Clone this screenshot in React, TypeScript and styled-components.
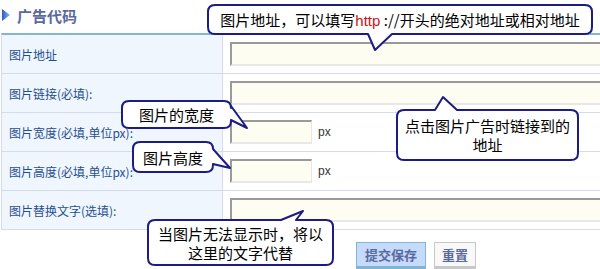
import React from 'react'
import styled, { createGlobalStyle } from 'styled-components';

const GlobalStyle = createGlobalStyle`
  body {
    margin: 0;
    background: #ffffff;
    font-family: "Liberation Sans", "Noto Sans CJK SC", sans-serif;
  }
`;

type Side = 'top' | 'right' | 'bottom';

interface CalloutType {
    left: number;
    top: number;
    width: number;
    height: number;
    side: Side;
    base: [number, number];
    tip: [number, number];
    children: React.ReactNode;
}

// rounded box with a pointer, drawn clockwise in one path
const bubblePath = (w: number, h: number, side: Side, base: [number, number], tip: [number, number]) => {
    const r = 7;
    const [a, b] = base;
    const t = `${tip[0]},${tip[1]}`;
    let d = `M ${r},0 `;
    if (side === 'top') d += `L ${a},0 L ${t} L ${b},0 `;
    d += `L ${w - r},0 Q ${w},0 ${w},${r} `;
    if (side === 'right') d += `L ${w},${a} L ${t} L ${w},${b} `;
    d += `L ${w},${h - r} Q ${w},${h} ${w - r},${h} `;
    if (side === 'bottom') d += `L ${b},${h} L ${t} L ${a},${h} `;
    d += `L ${r},${h} Q 0,${h} 0,${h - r} L 0,${r} Q 0,0 ${r},0 Z`;
    return d;
};

const Callout: React.FC<CalloutType> = ({ left, top, width, height, side, base, tip, children }) => (
    <CalloutBox style={{ left, top, width, height }}>
        <CalloutShape width={width} height={height}>
            <path d={bubblePath(width, height, side, base, tip)} fill="#ffffff" stroke="#1c1c84" strokeWidth={2} strokeLinejoin="round" />
        </CalloutShape>
        <CalloutText>{children}</CalloutText>
    </CalloutBox>
);

const rows = [
    { label: '图片地址', size: 'wide' },
    { label: '图片链接(必填):', size: 'wide' },
    { label: '图片宽度(必填,单位px):', size: 'small' },
    { label: '图片高度(必填,单位px):', size: 'small' },
    { label: '图片替换文字(选填):', size: 'wide' },
];

export default function App() {

    return (
        <Page>
            <GlobalStyle />

            <Header>
                <svg width="8" height="12" viewBox="0 0 8 12">
                    <defs>
                        <linearGradient id="tri" x1="0" y1="0" x2="1" y2="0">
                            <stop offset="0" stopColor="#2a5fc0" />
                            <stop offset="1" stopColor="#8fb8ee" />
                        </linearGradient>
                    </defs>
                    <polygon points="0,0 8,6 0,12" fill="url(#tri)" />
                </svg>
                <HeaderTitle>广告代码</HeaderTitle>
            </Header>

            <Table>
                {rows.map((row) => (
                    <Row key={row.label}>
                        <LabelCell>{row.label}</LabelCell>
                        <FieldCell>
                            <TextInput $small={row.size === 'small'} />
                            {row.size === 'small' && <Unit>px</Unit>}
                        </FieldCell>
                    </Row>
                ))}
            </Table>

            <Actions>
                <SubmitButton>提交保存</SubmitButton>
                <ResetButton>重置</ResetButton>
            </Actions>

            <Callout left={208} top={5} width={384} height={29} side="bottom" base={[160, 184]} tip={[167, 45]}>
                图片地址，可以填写<Red>http</Red> ://开头的绝对地址或相对地址
            </Callout>

            <Callout left={122} top={101} width={109} height={27} side="right" base={[5, 19]} tip={[125, 27]}>
                图片的宽度
            </Callout>

            <Callout left={133} top={142} width={80} height={30} side="right" base={[7, 22]} tip={[97, 26]}>
                图片高度
            </Callout>

            <Callout left={397} top={110} width={181} height={50} side="top" base={[38, 60]} tip={[46, -13]}>
                点击图片广告时链接到的<br />地址
            </Callout>

            <Callout left={148} top={220} width={185} height={45} side="top" base={[133, 148]} tip={[155, -9]}>
                当图片无法显示时，将以<br />这里的文字代替
            </Callout>
        </Page>
    );
}

const Page = styled.div`
  position: relative;
  width: 600px;
  height: 269px;
  overflow: hidden;
  background: #ffffff;
`;

const Header = styled.div`
  display: flex;
  align-items: center;
  gap: 7px;
  height: 33px;
  padding-left: 2px;
  padding-bottom: 3px;
  box-sizing: border-box;
`;

const HeaderTitle = styled.span`
  font-family: "Noto Sans CJK SC", sans-serif;
  font-size: 15px;
  font-weight: bold;
  color: #5a69a0;
  letter-spacing: 0px;
`;

const Table = styled.div`
  margin-left: 1px;
  border-top: 2px solid #82b6d4;
  border-left: 1px solid #d5dce8;
`;

const Row = styled.div`
  display: grid;
  grid-template-columns: 221px 1fr;
  height: 39px;
  border-bottom: 1px solid #d5dce8;
  box-sizing: border-box;
`;

const LabelCell = styled.div`
  display: flex;
  align-items: center;
  padding-left: 7px;
  background: #f0f6fe;
  border-right: 1px solid #d5dce8;
  font-family: "Noto Sans CJK SC", sans-serif;
  font-size: 12px;
  color: #1f4f8f;
`;

const FieldCell = styled.div`
  display: flex;
  align-items: center;
  gap: 6px;
  padding-left: 7px;
`;

const TextInput = styled.input<{ $small?: boolean }>`
  width: ${(p) => (p.$small ? '82px' : '380px')};
  height: 24px;
  box-sizing: border-box;
  margin: 0;
  padding: 0;
  background: #fdfdf2;
  border-top: 2px solid #9a9a9a;
  border-left: 2px solid #9a9a9a;
  border-right: 1px solid #e6e6e6;
  border-bottom: 2px solid #e8e8e8;
  flex-shrink: 0;
`;

const Unit = styled.span`
  font-family: "Liberation Sans", sans-serif;
  font-size: 12px;
  color: #333333;
`;

const Actions = styled.div`
  display: flex;
  gap: 8px;
  padding: 12px 0 0 356px;
`;

const BaseButton = styled.button`
  height: 27px;
  box-sizing: border-box;
  padding: 0;
  font-family: "Noto Sans CJK SC", sans-serif;
  font-size: 13px;
  font-weight: bold;
  color: #5a69a0;
  display: flex;
  align-items: center;
  justify-content: center;
`;

const SubmitButton = styled(BaseButton)`
  width: 70px;
  background: #c6dafc;
  border: 1px solid #80b6d4;
  border-bottom: 3px solid #80b6d4;
`;

const ResetButton = styled(BaseButton)`
  width: 42px;
  background: #f8f8f8;
  border: 1px solid #c8c8c8;
  border-bottom: 3px solid #c8c8c8;
`;

const CalloutBox = styled.div`
  position: absolute;
  display: flex;
  align-items: center;
  justify-content: center;
`;

const CalloutShape = styled.svg`
  position: absolute;
  left: 0;
  top: 0;
  overflow: visible;
`;

const CalloutText = styled.div`
  position: relative;
  font-family: "Noto Sans CJK SC", sans-serif;
  font-size: 15px;
  line-height: 19px;
  color: #000000;
  text-align: center;
  white-space: nowrap;
`;

const Red = styled.span`
  font-family: "Liberation Sans", sans-serif;
  color: #d01010;
`;
